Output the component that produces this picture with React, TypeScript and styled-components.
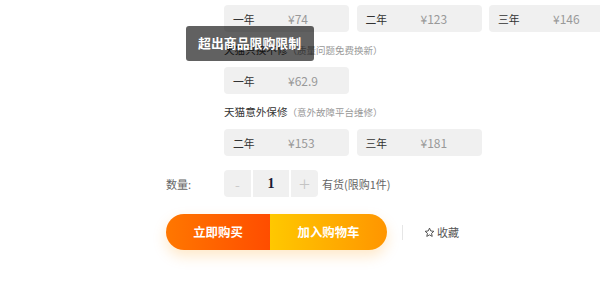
import styled, { createGlobalStyle } from 'styled-components';

const GlobalStyle = createGlobalStyle`
  html, body {
    margin: 0;
    padding: 0;
    background: #fff;
  }
  body {
    font-family: 'Noto Sans CJK SC', 'Noto Sans', sans-serif;
    color: #333;
  }
`;

interface Plan {
  term: string;
  price: string;
}

interface Service {
  title?: string;
  note?: string;
  plans: Plan[];
}

const services: Service[] = [
  {
    plans: [
      { term: '一年', price: '¥74' },
      { term: '二年', price: '¥123' },
      { term: '三年', price: '¥146' },
    ],
  },
  {
    title: '天猫只换不修',
    note: '（质量问题免费换新）',
    plans: [{ term: '一年', price: '¥62.9' }],
  },
  {
    title: '天猫意外保修',
    note: '（意外故障平台维修）',
    plans: [
      { term: '二年', price: '¥153' },
      { term: '三年', price: '¥181' },
    ],
  },
];

const Page = styled.div`
  position: relative;
  width: 600px;
  height: 282px;
  overflow: hidden;
  padding: 5px 0 0 166px;
  box-sizing: border-box;
`;

const ServiceList = styled.div`
  margin-left: 58px;
  display: flex;
  flex-direction: column;
`;

const ServiceTitle = styled.div`
  margin: 9px 0 8px;
  height: 18px;
  line-height: 18px;
  font-size: 10.6px;
  color: #333;
  white-space: nowrap;
`;

const ServiceNote = styled.span`
  font-size: 9.5px;
  color: #999;
`;

const PlanRow = styled.div`
  display: flex;
  gap: 7.5px;
  width: 500px;
`;

const PlanBox = styled.div`
  flex: 0 0 125px;
  height: 27px;
  box-sizing: border-box;
  padding-left: 9px;
  display: flex;
  align-items: center;
  background: #f0f0f0;
  border-radius: 4px;
`;

const Term = styled.span`
  width: 55px;
  font-size: 10.8px;
  color: #333;
`;

const Price = styled.span`
  font-size: 12px;
  color: #999;
`;

const QtyRow = styled.div`
  margin-top: 14px;
  display: flex;
  align-items: center;
  height: 27px;
`;

const QtyLabel = styled.span`
  width: 58px;
  font-size: 11px;
  color: #666;
`;

const Stepper = styled.div`
  display: flex;
  gap: 2px;
  height: 27px;
`;

const StepBtn = styled.div<{ $side: 'left' | 'right' }>`
  width: 27px;
  display: flex;
  align-items: center;
  justify-content: center;
  background: #f0f0f0;
  color: #c4c4c4;
  font-family: 'Noto Sans', sans-serif;
  font-size: ${(p) => (p.$side === 'left' ? '15px' : '20px')};
  font-weight: 300;
  border-radius: ${(p) => (p.$side === 'left' ? '4px 0 0 4px' : '0 4px 4px 0')};
`;

const QtyValue = styled.div`
  width: 36px;
  display: flex;
  align-items: center;
  justify-content: center;
  background: #f0f0f0;
  font-family: 'Liberation Serif', serif;
  font-size: 14px;
  font-weight: bold;
  color: #1a1a33;
`;

const Stock = styled.span`
  margin-left: 4px;
  font-size: 11px;
  color: #666;
`;

const ActionRow = styled.div`
  margin-top: 17px;
  display: flex;
  align-items: center;
`;

const ButtonGroup = styled.div`
  display: flex;
  height: 36px;
  border-radius: 18px;
  overflow: hidden;
  box-shadow: 0 6px 14px rgba(255, 150, 0, 0.22);
`;

const ActionButton = styled.div<{ $from: string; $to: string; $width: number }>`
  width: ${(p) => p.$width}px;
  display: flex;
  align-items: center;
  justify-content: center;
  background: linear-gradient(90deg, ${(p) => p.$from}, ${(p) => p.$to});
  color: #fff;
  font-size: 12.4px;
  font-weight: bold;
`;

const Divider = styled.div`
  width: 1px;
  height: 15px;
  background: #e6e6e6;
  margin: 0 21px 0 15px;
`;

const Favorite = styled.span`
  display: flex;
  align-items: center;
  gap: 2px;
  font-size: 11px;
  color: #555;
`;

const Tooltip = styled.div`
  position: absolute;
  left: 186px;
  top: 26px;
  width: 128px;
  height: 35px;
  box-sizing: border-box;
  padding-left: 12px;
  display: flex;
  align-items: center;
  padding-bottom: 2px;
  background: rgba(0, 0, 0, 0.62);
  border-radius: 3px;
  color: #fff;
  font-size: 12.9px;
  font-weight: bold;
`;

const StarIcon = () => (
  <svg width="11" height="11" viewBox="0 0 24 24" fill="none" stroke="#444" strokeWidth="2" strokeLinejoin="round">
    <path d="M12 2.5l2.9 6.2 6.6.7-5 4.5 1.4 6.6L12 17.2l-5.9 3.3 1.4-6.6-5-4.5 6.6-.7z" />
  </svg>
);

export default function App() {
  return (
    <>
      <GlobalStyle />
      <Page>
        <ServiceList>
          {services.map((s, i) => (
            <div key={i}>
              {s.title && (
                <ServiceTitle>
                  {s.title}
                  <ServiceNote>{s.note}</ServiceNote>
                </ServiceTitle>
              )}
              <PlanRow>
                {s.plans.map((p) => (
                  <PlanBox key={p.term}>
                    <Term>{p.term}</Term>
                    <Price>{p.price}</Price>
                  </PlanBox>
                ))}
              </PlanRow>
            </div>
          ))}
        </ServiceList>
        <QtyRow>
          <QtyLabel>数量:</QtyLabel>
          <Stepper>
            <StepBtn $side="left">-</StepBtn>
            <QtyValue>1</QtyValue>
            <StepBtn $side="right">+</StepBtn>
          </Stepper>
          <Stock>有货(限购1件)</Stock>
        </QtyRow>
        <ActionRow>
          <ButtonGroup>
            <ActionButton $from="#ff7700" $to="#ff4d00" $width={104}>立即购买</ActionButton>
            <ActionButton $from="#ffc800" $to="#ff9500" $width={117}>加入购物车</ActionButton>
          </ButtonGroup>
          <Divider />
          <Favorite>
            <StarIcon />
            收藏
          </Favorite>
        </ActionRow>
        <Tooltip>超出商品限购限制</Tooltip>
      </Page>
    </>
  );
}
